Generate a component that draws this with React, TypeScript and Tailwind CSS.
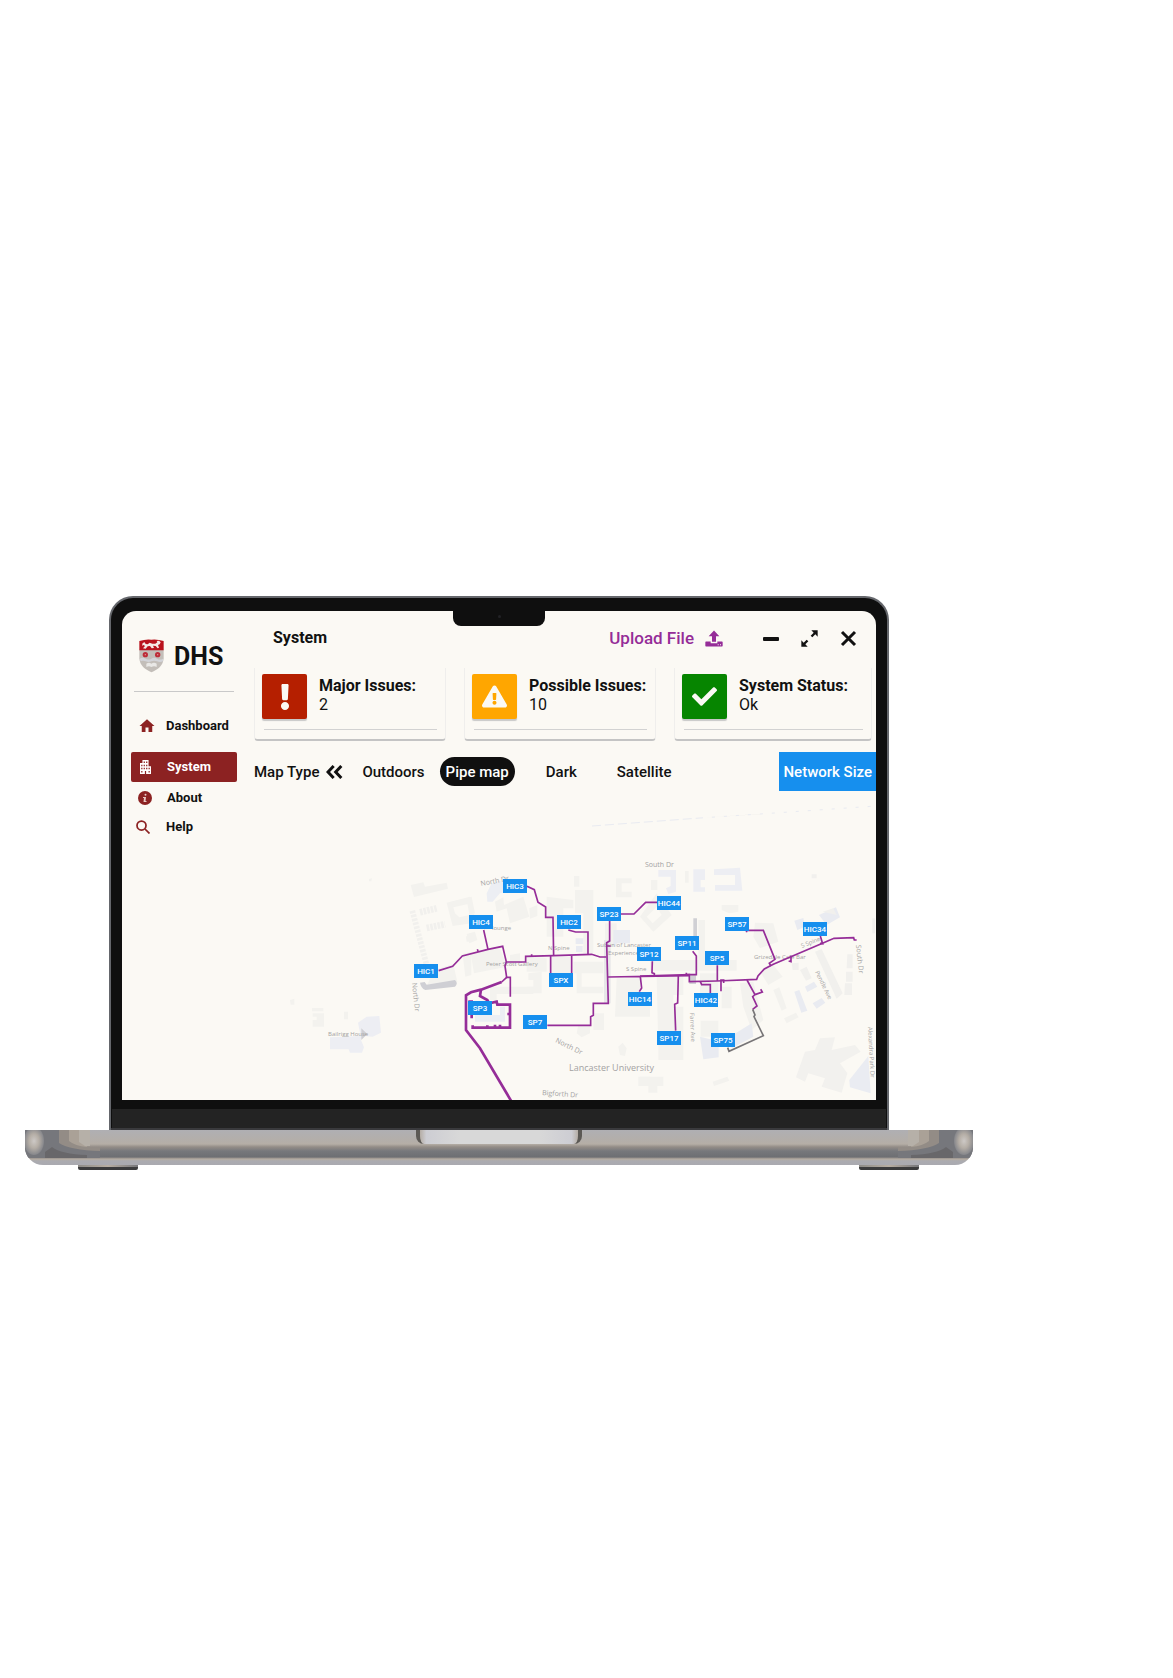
import type { ReactNode } from "react";
import { FaCheck, FaExclamation, FaExclamationTriangle } from "react-icons/fa";
import { MdApartment, MdHome } from "react-icons/md";

function Crest() {
  return (
    <svg width="25" height="34" viewBox="0 0 75 102" aria-label="University crest" role="img">
      <path d="M1 32H74V58C73 80 55 93 37.500 100C20 93 2 80 1 58Z" fill="#c3beb9" />
      <path d="M1 6Q20 0 37 2Q55 0 74 6V34H1Z" fill="#b9131d" />
      <path
        d="M11 12l6-2 3 5 6 1 6-5 8 3 9 0 6-4-2-4 7-1 5 5-3 6-5 2 3 8-4 2-6-7-8-1 3 7-7 1-5-7-7 1-6 7-8-1 6-7-4-3-5 2z"
        fill="#f6e9e6"
      />
      <circle cx="19" cy="47" r="8" fill="#bd2c38" />
      <circle cx="56" cy="47" r="8" fill="#bd2c38" />
      <circle cx="19" cy="47" r="2" fill="#d9a0a0" />
      <circle cx="56" cy="47" r="2" fill="#d9a0a0" />
      <path d="M2 59q9-5 18 0t17 0 17 0 18 0v8q-9 4-18 0t-17 0-17 0-15 0z" fill="#d3d4d9" />
      <path d="M22 74q8-5 15 0 8-5 16 0v10q-8-4-16 0-7-4-15 0z" fill="#e9e8e6" />
    </svg>
  );
}

function InfoIcon() {
  return (
    <svg width="14" height="14" viewBox="0 0 28 28" aria-hidden="true">
      <circle cx="14" cy="14" r="14" fill="#8c2222" />
      <circle cx="15" cy="7.500" r="2" fill="#e8c9c4" />
      <path d="M10 12h6l-1 8h2v2h-6l1-8h-2z" fill="#e8c9c4" />
    </svg>
  );
}

function SearchIcon() {
  return (
    <svg width="14" height="14" viewBox="0 0 28 28" fill="none" stroke="#8c2222" strokeWidth="3.500" aria-hidden="true">
      <circle cx="11" cy="11" r="9" />
      <path d="M18 18l9 9" />
    </svg>
  );
}

function UploadIcon() {
  return (
    <svg width="18" height="17" viewBox="0 0 54 50" fill="#952d98" aria-hidden="true">
      <path d="M27 1L43 18H33V35H21V18H11Z" />
      <path fillRule="evenodd" d="M3 34H17V39H37V34H51Q53 34 53 36V47Q53 49 51 49H3Q1 49 1 47V36Q1 34 3 34ZM38 42V45H41V42ZM45 42V45H48V42Z" />
    </svg>
  );
}

function ExpandIcon() {
  return (
    <svg width="17" height="17" viewBox="0 0 51 51" fill="#111" aria-hidden="true">
      <path d="M31 1H50V20L43 13L34 22L29 17L38 8Z" />
      <path d="M20 50H1V31L8 38L17 29L22 34L13 43Z" />
    </svg>
  );
}

function ChevronsIcon() {
  return (
    <svg width="17" height="14" viewBox="0 0 51 42" fill="none" stroke="#111" strokeWidth="9" aria-hidden="true">
      <path d="M23 3L6 21L23 39M46 3L29 21L46 39" />
    </svg>
  );
}

type NavProps = { icon: ReactNode; label: string; className: string };

function NavLink({ icon, label, className }: NavProps) {
  return (
    <a href="#" className={"flex items-center text-[13px] leading-4 font-bold text-[#111] " + className}>
      {icon}
      {label}
    </a>
  );
}

function Sidebar() {
  return (
    <aside className="w-[132px] shrink-0 pt-[28px]">
      <div className="flex items-center gap-[10px] pl-[17px]">
        <Crest />
        <span className="pt-[2px] text-[25px] leading-8 font-bold">DHS</span>
      </div>
      <hr className="mt-[18px] mr-5 ml-3 border-[#c9c9c9]" />
      <nav className="mt-[25px] flex flex-col">
        <NavLink className="gap-[10px] pl-4" icon={<MdHome size={18} color="#8c2222" />} label="Dashboard" />
        <a
          href="#"
          aria-current="page"
          className="mt-[17px] mr-[17px] ml-[9px] flex h-[30px] items-center gap-4 rounded-xs bg-[#8c2222] pl-[9px] text-[13px] font-bold text-white"
        >
          <MdApartment viewBox="3 3 18 18" preserveAspectRatio="none" className="h-[14px] w-[11px]" />
          System
        </a>
        <NavLink className="mt-2 gap-[15px] pl-4" icon={<InfoIcon />} label="About" />
        <NavLink className="mt-[13px] gap-4 pl-[14px]" icon={<SearchIcon />} label="Help" />
      </nav>
    </aside>
  );
}

function StatusCard({ icon, color, title, value }: { icon: ReactNode; color: string; title: string; value: string }) {
  return (
    <section className="h-[73px] rounded-b-sm border-x border-b-2 border-x-[#efeeec] border-b-[#c4c4c4] px-[7px] pt-[6px]">
      <div className="flex gap-3">
        <div className={"flex size-[45px] shrink-0 items-center justify-center rounded-xs text-[#fbf9f4] shadow-[0_2px_1px_#c8c8c8] " + color}>
          {icon}
        </div>
        <div className="whitespace-nowrap">
          <h2 className="mt-[2px] text-base leading-5 font-bold">{title}</h2>
          <p className="text-base leading-[18px]">{value}</p>
        </div>
      </div>
      <hr className="mt-[10px] mr-[1px] ml-[2px] border-[#d2d2d2]" />
    </section>
  );
}

const pins: [string, number, number][] = [
  ["HIC3", 503, 879],
  ["HIC4", 469, 915],
  ["HIC2", 557, 915],
  ["SP23", 597, 907],
  ["HIC1", 414, 964],
  ["SPX", 549, 973],
  ["SP3", 468, 1001],
  ["SP7", 523, 1015],
  ["HIC44", 657, 896],
  ["SP57", 725, 917],
  ["HIC34", 803, 922],
  ["SP11", 675, 936],
  ["SP12", 637, 947],
  ["SP5", 705, 951],
  ["HIC14", 628, 992],
  ["HIC42", 694, 993],
  ["SP17", 657, 1031],
  ["SP75", 711, 1033],
];

const streets: [string, number, number, number, number][] = [
  ["North Dr", 481, 886, -11, 7],
  ["lounge", 492, 930, 0, 6],
  ["N Spine", 548, 950, 0, 6],
  ["Peter Scott Gallery", 486, 966, 0, 6],
  ["Subun of Lancaster", 597, 947, 0, 6],
  ["Experience Center", 608, 955, 0, 6],
  ["S Spine", 626, 971, 0, 6],
  ["North Dr", 412, 983, 84, 7],
  ["North Dr", 555, 1042, 26, 7],
  ["Bailrigg House", 328, 1036, 0, 6],
  ["Bigforth Dr", 542, 1095, 4, 7],
  ["South Dr", 645, 867, 0, 7],
  ["Grizedale Cafe Bar", 754, 959, 0, 6],
  ["S Spine", 802, 948, -22, 6],
  ["Pendle Ave", 815, 972, 64, 6],
  ["Farrer Ave", 690, 1013, 88, 6],
  ["South Dr", 856, 945, 84, 7],
  ["Alexandra Park Dr", 868, 1027, 87, 6],
];

function PipeMap() {
  return (
    <svg
      viewBox="254 791 622 309"
      preserveAspectRatio="xMidYMid slice"
      className="block h-[309px] w-full"
      role="img"
      aria-label="Pipe map of Lancaster University"
    >
      <path d="M592 826L700 818" stroke="#e9ebf1" strokeDasharray="9 4" />
      <path d="M700 818L760 814L876 806" stroke="#e9ebf1" strokeDasharray="3 9" />
      <g transform="translate(270 800) scale(.3333)">
        <path d="M422 255L460 247L465 260L530 248L534 266L432 291Z" fill="#f3f2ee" />
        <path d="M530 308L600 290L605 310L550 322L560 358L605 350V370L548 378Z" fill="#f3f2ee" />
        <path d="M427 332L470 495" stroke="#f1f0ed" strokeWidth="17" strokeDasharray="8 4" />
        <path d="M450 337L500 325M470 384L525 373" stroke="#f1f0ed" strokeWidth="20" strokeDasharray="8 3" />
        <path d="M588 410L600 398V425H590ZM578 462L604 455V525L586 530Z" fill="#f3f2ee" />
        <path d="M492 510L550 492L562 545L470 558Z" fill="#f3f2ee" />
        <path d="M450 548L464 546L470 554L555 540Q566 550 555 560L466 570Q453 565 450 548Z" fill="#cfcfd4" />
        <path d="M126 624H160V634H126ZM128 640H162V680H128V660H140V650H128ZM222 635H234V658H222ZM60 600L73 596V614H62ZM297 237L306 235L304 244H297Z" fill="#f3f2ee" />
        <path d="M180 712L272 708L264 668L290 650L328 648L333 698L308 710L282 708L272 718L282 742L276 758H240L236 748H180Z" fill="#edeef3" />
        <path d="M274 685L292 702L274 720Z" fill="#cfcfd4" />
      </g>
      <g transform="translate(400 840) scale(.3333)">
        <path d="M260 160L275 130L300 122L366 125L370 145L300 160L278 185H262Z" fill="#eceef3" />
        <path d="M285 185L310 172L312 195L370 170L388 230L330 250L320 205L290 215ZM388 205L412 195V228L390 236ZM200 282L225 275L232 300L208 310Z" fill="#f3f2ee" />
        <path d="M155 185L215 170L225 220L208 224L202 190L160 200ZM160 215L178 232L222 222L226 236L160 250Z" fill="#f3f2ee" />
        <path d="M440 170L520 180V205H490V290H440ZM522 108H538V140H522ZM525 150H580V340H550V220H525ZM648 115H695V130H665V155H695V172H648Z" fill="#f3f2ee" />
        <path d="M212 340L300 325L320 380L222 400ZM330 345L360 340V375H330ZM380 348L440 355V395H380ZM385 400L425 395V460H380V440H400V420H385Z" fill="#f3f2ee" />
        <path d="M455 350H510V400H455ZM520 365H610V400H545V440H610V460H530V400H520ZM650 415H720V460H750V530H645ZM615 250H650V320H615Z" fill="#f3f2ee" />
        <path d="M527 295H550V312H527ZM640 270H690V310H650V320H640ZM528 318H548V336H528Z" fill="#e9ebf1" />
        <path d="M612 300H632V490H612Z" fill="#e7e7e8" />
        <path d="M225 500H245V525H300V500H315V545H225Z" fill="#eceef3" />
        <path d="M270 440H400V462H290V480H270ZM580 520H612V570H580ZM535 555H570V580L545 592L530 580ZM655 620L668 608L680 625L675 648L660 645ZM715 710H750V738H715Z" fill="#f3f2ee" />
      </g>
      <g transform="translate(640 800) scale(.3333)">
        <path d="M55 210H108V275L85 282L78 265L92 258V230H55ZM160 208H195V240H182V262H195V275H160ZM222 208L300 203L307 272H225V255H285V225H222Z" fill="#edeef3" />
        <path d="M33 240H52V270H33ZM135 213H146V248H135ZM0 350L50 280L95 345L40 395ZM20 350L38 370L65 345L50 320Z" fill="#f3f2ee" fillRule="evenodd" />
        <path d="M245 315H295V335L268 340L245 330ZM345 368L400 370L415 425L360 445L340 410ZM175 360H195V490H175ZM30 480H290V512H30ZM50 530H130V745H55ZM130 585H100V620H130ZM55 745H130V780H55Z" fill="#f3f2ee" />
        <path d="M180 520H235V590H180ZM182 662H235V710H182ZM245 560H275V625H245ZM300 550L340 545L370 660L335 690L310 620ZM360 515L400 495L428 530L385 555ZM400 570L418 562L440 625L425 632ZM432 655L468 638L476 652L440 670ZM0 830H70V858H52V878H25V858H0ZM218 845L262 830L268 842L222 858Z" fill="#f3f2ee" />
        <path d="M180 710L220 720H236V772L190 778ZM270 710L335 670L340 710L275 745ZM463 575L478 570L502 632L484 638ZM495 560L522 545L532 560L502 576ZM518 610L545 594L556 608L530 626ZM537 345L588 322L600 352L560 375ZM463 362L490 354L495 380L472 390Z" fill="#e9ebf1" />
        <path d="M525 455L545 447L608 580L590 596ZM455 490L476 488V510H458ZM480 510L500 500L515 535L498 542ZM622 463H638V505H620ZM618 515H638V545H618ZM615 550H636V585H613ZM515 223H530V235H515ZM548 335L580 325L590 345Z" fill="#f1f0ed" />
        <path d="M468 832L495 755L525 750L540 715L585 712L575 750L645 735L662 755L600 790L622 820L605 878L545 860L555 835L505 820L495 845Z" fill="#f2f1ee" />
        <path d="M685 768L692 880L630 862L628 840Z" fill="#eaecf2" />
        <path d="M160 355H171V408H160ZM148 525H168V552H148Z" fill="#d0d0d4" />
        <path d="M697 355H705V400H697Z" fill="#f1f0ed" />
      </g>
      <g fontFamily="'Open Sans', sans-serif" fill="#a3a2a2">
        {streets.map(([name, x, y, angle, size], index) => (
          <text key={index} fontSize={size} transform={`translate(${x} ${y}) rotate(${angle})`}>
            {name}
          </text>
        ))}
        <text x="569" y="1071" fontSize="9">
          Lancaster University
        </text>
      </g>
      <g transform="translate(400 840) scale(.3333)" fill="none" stroke="#952d98" strokeWidth="5">
        <path d="M116 392L158 379L187 348L264 328L308 319L319 366H377V349L460 347L575 343L600 351H619" />
        <path d="M251 270L264 328M232 328L235 336M395 343V350M381 139L403 149L414 187L437 201V232H459L461 347M505 270L527 276H564V343M515 347V400M452 347V400" />
        <path d="M319 366L315 378L320 412H331V470M663 222H702L737 187H780L791 198M629 243V303L620 308L625 490H580V526L572 530V556H442" />
        <path d="M620 318H632M624 411L869 407M721 410L725 444L718 455" />
        <path d="M320 412L305 426" />
        <g strokeWidth="8">
          <path d="M305 426L243 449L213 457L198 466V570L240 625L333 782" />
          <path d="M243 449L240 468L262 480L268 490L290 485L292 494H330V563H218V556" />
          <path d="M262 564V556M285 564V554M300 564V554M331 522H322M215 520V535M205 485H215V500" />
        </g>
      </g>
      <g transform="translate(640 800) scale(.3333)" fill="none" stroke="#952d98" strokeWidth="5">
        <path d="M0 528L148 524V545L230 543L350 538L354 528L373 507L400 493L544 431L582 415L641 413L643 420H650" />
        <path d="M37 484L36 518L43 521V528M158 454L169 468V524H139V518M319 397L321 391H370L405 478L388 490L393 498M232 496V543M541 408L548 431L540 430M453 467V485L446 483" />
        <path d="M115 526L113 609L104 613L107 692M181 545L185 554H211V580M243 574V540H251V549M321 540L345 584L367 576L362 568M345 584L338 590L351 618L338 628" />
        <path d="M338 628L345 645L342 650L370 707L267 754L263 743" stroke="#777577" />
      </g>
      <g fontFamily="Roboto, sans-serif" fontWeight="500" fontSize="8" textAnchor="middle">
        {pins.map(([name, x, y]) => (
          <g key={name}>
            <rect x={x} y={y} width="24" height="14" fill="#168fee" />
            <text x={x + 12} y={y + 10} fill="#fff">
              {name}
            </text>
          </g>
        ))}
      </g>
    </svg>
  );
}

function MapToolbar() {
  return (
    <div className="mt-[11px] flex h-[39px] items-center text-[15px] leading-5 font-medium whitespace-nowrap">
      <span>Map Type</span>
      <button type="button" aria-label="Collapse map types" className="ml-[7px]">
        <ChevronsIcon />
      </button>
      <button type="button" className="ml-[19px]">
        Outdoors
      </button>
      <button type="button" aria-pressed="true" className="ml-[15px] h-[29px] rounded-full bg-[#101010] px-[6px] text-white">
        Pipe map
      </button>
      <button type="button" className="ml-[31px]">
        Dark
      </button>
      <button type="button" className="ml-10">
        Satellite
      </button>
      <button type="button" className="ml-auto h-full bg-[#168fee] px-1 text-white">
        Network Size
      </button>
    </div>
  );
}

function Dashboard() {
  return (
    <div className="flex overflow-hidden rounded-t-[14px] bg-[#fbf9f4] font-[Roboto,sans-serif] text-[#111]">
      <Sidebar />
      <main className="min-w-0 grow">
        <div className="flex h-[57px] items-start px-[19px] pt-[17px] text-base leading-5">
          <h1 className="font-bold">System</h1>
          <button type="button" className="ml-auto flex items-center gap-[11px] text-[17px] leading-5 font-medium text-[#952d98]">
            Upload File
            <UploadIcon />
          </button>
          <div className="flex items-center gap-[22px] pt-[2px] pl-10">
            <button type="button" aria-label="Minimise" className="flex h-4 w-4 items-center">
              <span className="h-1 w-full rounded-[1px] bg-[#111]" />
            </button>
            <button type="button" aria-label="Expand">
              <ExpandIcon />
            </button>
            <button type="button" aria-label="Close">
              <svg width="17" height="17" viewBox="0 0 17 17" stroke="#111" strokeWidth="3" aria-hidden="true">
                <path d="M2 2L15 15M15 2L2 15" />
              </svg>
            </button>
          </div>
        </div>
        <div className="grid grid-cols-[192fr_192fr_198fr] gap-[18px] pr-1">
          <StatusCard title="Major Issues:" value="2" color="bg-[#b51f00]" icon={<FaExclamation size={26} />} />
          <StatusCard
            title="Possible Issues:"
            value="10"
            color="bg-[#ffa600]"
            icon={<FaExclamationTriangle size={25} />}
          />
          <StatusCard title="System Status:" value="Ok" color="bg-[#068500]" icon={<FaCheck size={25} />} />
        </div>
        <MapToolbar />
        <PipeMap />
      </main>
    </div>
  );
}

function BaseEnd({ side }: { side: "left" | "right" }) {
  const id = "shade-" + side;
  return (
    <svg
      width="75"
      height="35"
      viewBox="0 0 75 35"
      aria-hidden="true"
      className={side === "left" ? "shrink-0" : "shrink-0 -scale-x-100"}
    >
      <defs>
        <radialGradient id={id}>
          <stop offset="0" stopColor="#cdc9c6" />
          <stop offset=".5" stopColor="#b5aea6" />
          <stop offset="1" stopColor="#85868b" />
        </radialGradient>
      </defs>
      <path d="M34 0H60V17H75V21H34Z" fill="#938c86" />
      <path d="M44 0H62V17Q50 16 44 11Z" fill="#aaa197" />
      <path d="M54 0H65V16H60L54 12Z" fill="#b6b0a8" />
      <path d="M0 0H34V13Q45 20 75 21V28H0Z" fill="#76777c" />
      <path d="M20 22L27 17Q36 24 62 25V28H20Z" fill="#68676a" />
      <ellipse cx="9" cy="11" rx="10" ry="14" fill={`url(#${id})`} />
    </svg>
  );
}

function Foot() {
  return (
    <div className="h-[5px] w-[60px] rounded-b-xs border-b-[3px] border-[#3c3c3d] bg-linear-to-r from-[#8d8b87] via-[#b8aea2] to-[#77777a]" />
  );
}

export default function App() {
  return (
    <div className="min-h-screen bg-white pt-[596px] pr-[200px] pb-[507px] pl-[25px]">
      <div className="mx-[84px] rounded-t-[24px] border-2 border-b-0 border-[#65676c] bg-[#0f0f0f] pt-[13px]">
        <div className="relative mx-[11px]">
          <Dashboard />
          <div className="absolute top-0 left-[331px] h-[15px] w-[92px] rounded-b-lg bg-[#0f0f0f]" aria-hidden="true">
            <div className="mx-auto mt-1 size-[3px] rounded-full bg-[#222226]" />
          </div>
        </div>
        <div className="mx-[1px] mt-[9px] h-[19px] bg-[#232323]" />
        <div className="h-[2px] bg-[#3a3a3d]" />
      </div>
      <div
        className="flex h-[35px] justify-between overflow-hidden rounded-b-[18px] bg-[linear-gradient(#afafb3_0,#b5aea6_14px,#938c86_17px,#77787c_21px,#6e6f73_27px,#b6aca1_29px,#ababb0_31px,#aaaab0_35px)]"
        aria-hidden="true"
      >
        <BaseEnd side="left" />
        <div className="h-[14px] w-[166px] rounded-b-lg border-x-4 border-x-[#5c5955] bg-[linear-gradient(90deg,#b5ada5_0,#cdcdd3_4%,#d8d8d8_25%,#d8d8d8_75%,#cdcdd3_96%,#b5ada5_100%)]" />
        <BaseEnd side="right" />
      </div>
      <div className="flex justify-between pr-[54px] pl-[53px]" aria-hidden="true">
        <Foot />
        <Foot />
      </div>
    </div>
  );
}
